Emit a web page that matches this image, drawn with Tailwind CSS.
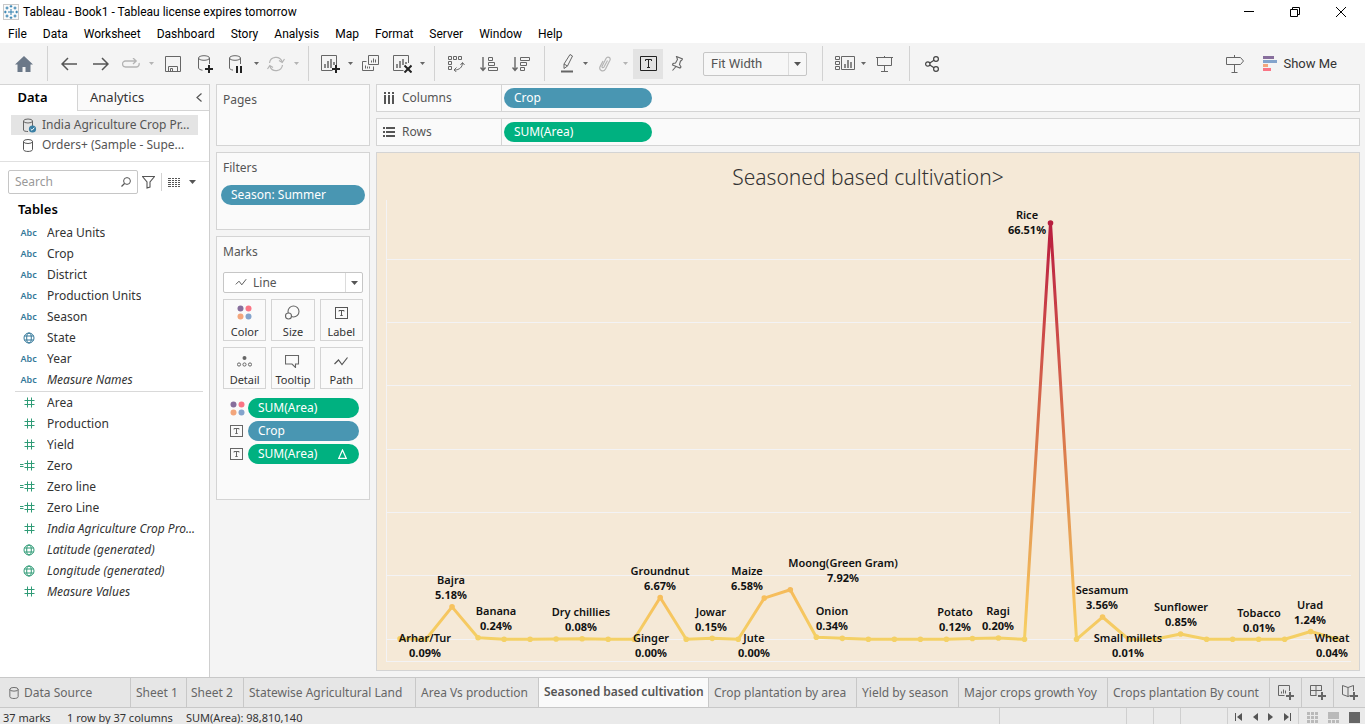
<!DOCTYPE html>
<html lang="en">
<head>
<meta charset="utf-8">
<title>Tableau - Book1</title>
<script src="https://cdn.jsdelivr.net/npm/@tailwindcss/browser@4"></script>
</head>
<body class="flex h-screen flex-col overflow-hidden bg-[#f4f4f4] font-['Noto_Sans',sans-serif] text-xs text-[#333]">

<!-- Icon library -->
<svg class="hidden" aria-hidden="true">
  <symbol id="caret" viewBox="0 0 5 3"><path d="M0 0h5L2.5 3z" fill="currentColor"/></symbol>
  <symbol id="db" viewBox="0 0 10 13"><path d="M.5 2.500v8c0 2.600 9 2.600 9 0v-8" fill="none" stroke="currentColor"/><ellipse cx="5" cy="2.500" rx="4.500" ry="2" fill="none" stroke="currentColor"/></symbol>
  <symbol id="tbox" viewBox="0 0 13 12"><rect x=".5" y=".5" width="12" height="11" fill="none" stroke="currentColor"/><path d="M4 4.500V3.500h5v1M6.500 3.500v5M5.300 8.500h2.400" fill="none" stroke="currentColor"/></symbol>
  <symbol id="dots" viewBox="0 0 15 15"><circle cx="3.500" cy="3.500" r="3" fill="#876e9c"/><circle cx="11.500" cy="3.500" r="3" fill="#fa7585"/><circle cx="3.500" cy="11.500" r="3" fill="#f3a67c"/><circle cx="11.500" cy="11.500" r="3" fill="#84a4cc"/></symbol>
  <symbol id="hash" viewBox="0 0 11 11"><path d="M3.500.5v10M7.500.5v10M.5 3.500h10M.5 7.500h10" stroke="currentColor" fill="none"/></symbol>
  <symbol id="calc" viewBox="0 0 15 11"><path d="M7.500.5v10M11.500.5v10M4.500 3.500h10M4.500 7.500h10M0 4.500h3.500M0 6.500h3.500" stroke="currentColor" fill="none"/></symbol>
  <symbol id="globe" viewBox="0 0 12 12"><circle cx="6" cy="6" r="5" fill="none" stroke="currentColor"/><ellipse cx="6" cy="6" rx="2.300" ry="5" fill="none" stroke="currentColor"/><path d="M1.500 4h9M1.500 8h9" stroke="currentColor"/></symbol>
  <symbol id="zig" viewBox="0 0 14 10"><path d="M.5 8 4.500 4l3.500 4.500 5.500-7" fill="none" stroke="currentColor" stroke-width="1.200"/></symbol>
</svg>

<header class="flex-none bg-white font-['Roboto','Noto_Sans',sans-serif] text-black">
  <div class="flex h-6 items-center">
    <svg class="ml-[3px] size-4" viewBox="0 0 16 16"><rect x=".5" y=".5" width="15" height="15" fill="#fafafa" stroke="#c9c9c9"/><path d="M8 5v6M5 8h6M4 2.500v3M2.500 4h3M12 2.500v3M10.500 4h3M4 10.500v3M2.500 12h3M12 10.500v3M10.500 12h3M8 1v2.600M6.700 2.300h2.600M8 12.400V15M6.700 13.700h2.600M1 8h2.600M2.300 6.700v2.600M12.400 8H15M13.700 6.700v2.600" stroke="#2f7fae" stroke-width="1"/></svg>
    <h1 class="ml-1">Tableau - Book1 - Tableau license expires tomorrow</h1>
    <div class="mr-px ml-auto flex">
      <button class="flex h-5 w-[46px] items-center justify-center" aria-label="Minimize"><svg class="size-[10px]" viewBox="0 0 10 10"><path d="M0 4.500h10" stroke="#000"/></svg></button>
      <button class="flex h-5 w-[46px] items-center justify-center" aria-label="Restore"><svg class="size-[10px]" viewBox="0 0 10 10"><path d="M.5 2.500h7v7h-7zM2.500 2.500v-2h7v7h-2" fill="none" stroke="#000"/></svg></button>
      <button class="flex h-5 w-[46px] items-center justify-center" aria-label="Close"><svg class="size-[10px]" viewBox="0 0 10 10"><path d="M0 0l10 10M10 0 0 10" stroke="#000"/></svg></button>
    </div>
  </div>
  <nav class="flex h-[19px] items-center gap-4 pl-2">
    <button>File</button><button>Data</button><button>Worksheet</button><button>Dashboard</button><button>Story</button><button>Analysis</button><button>Map</button><button>Format</button><button>Server</button><button>Window</button><button>Help</button>
  </nav>
</header>

<div class="flex h-[41px] flex-none items-center text-[#666]" role="toolbar">
  <button class="flex h-8 w-[47px] items-center justify-center" aria-label="Home"><svg class="h-4 w-[18px]" viewBox="0 0 18 16"><path d="M9 0 0 8.500h2.500V16h5v-5h3v5h5V8.500H18z" fill="#6b7888"/></svg></button>
  <span class="h-[35px] w-px bg-[#d2d2d2]"></span>
  <button class="ml-[5px] flex h-8 w-8 items-center justify-center" aria-label="Undo"><svg class="h-3.5 w-4" viewBox="0 0 16 14"><path d="M16 7H1M7 1 1 7l6 6" fill="none" stroke="#555" stroke-width="1.500"/></svg></button>
  <button class="flex h-8 w-8 items-center justify-center" aria-label="Redo"><svg class="h-3.5 w-4" viewBox="0 0 16 14"><path d="M0 7h15M9 1l6 6-6 6" fill="none" stroke="#555" stroke-width="1.500"/></svg></button>
  <button class="flex h-8 w-7 items-center justify-center text-[#b4b4b4]" aria-label="Replay"><svg class="h-3 w-[18px]" viewBox="0 0 18 12"><path d="M6 3H3.500a3 3 0 0 0 0 6h11a3 3 0 0 0 2.500-4M6 3h8M11 0l3.200 3L11 6" fill="none" stroke="currentColor" stroke-width="1.300"/></svg></button>
  <button class="flex h-8 w-3 items-center justify-center text-[#b4b4b4]" aria-label="Replay options"><svg class="h-[3px] w-[5px]"><use href="#caret"/></svg></button>
  <button class="flex h-8 w-8 items-center justify-center" aria-label="Save"><svg class="size-4" viewBox="0 0 16 16"><path d="M.5.5h15v15H.5zM3.500 15.500v-5h9v5M5.500 15.500v-3h2v3" fill="none" stroke="currentColor"/></svg></button>
  <button class="flex h-8 w-8 items-center justify-center" aria-label="New data source"><svg class="h-[18px] w-4" viewBox="0 0 16 18"><path d="M1.500 3v10c0 1 2 2 4 2.200M12.500 3v6" fill="none" stroke="currentColor"/><ellipse cx="7" cy="3" rx="5.500" ry="2.300" fill="none" stroke="currentColor"/><path d="M12 10v8M8 14h8" stroke="#222" stroke-width="2"/></svg></button>
  <button class="flex h-8 w-7 items-center justify-center" aria-label="Pause updates"><svg class="h-[18px] w-4" viewBox="0 0 16 18"><path d="M2.500 3v10c0 1 1.500 1.800 3.500 2.100M13.500 3v6" fill="none" stroke="currentColor"/><ellipse cx="8" cy="3" rx="5.500" ry="2.300" fill="none" stroke="currentColor"/><path d="M10 11v7M14 11v7" stroke="#222" stroke-width="2"/></svg></button>
  <button class="flex h-8 w-3.5 items-center justify-center" aria-label="Pause options"><svg class="h-[3px] w-[5px]"><use href="#caret"/></svg></button>
  <button class="flex h-8 w-[26px] items-center justify-center text-[#b4b4b4]" aria-label="Refresh"><svg class="h-4 w-[18px]" viewBox="0 0 18 16"><path d="M2.500 7A6.500 6.500 0 0 1 15 5.500M15.500 9A6.500 6.500 0 0 1 3 10.500M17.500 3 15.200 6.500 12 4.500M.5 13l2.300-3.500L6 11.500" fill="none" stroke="currentColor" stroke-width="1.200"/></svg></button>
  <button class="flex h-8 w-3.5 items-center justify-center text-[#b4b4b4]" aria-label="Refresh options"><svg class="h-[3px] w-[5px]"><use href="#caret"/></svg></button>
  <span class="ml-[5px] h-[35px] w-px bg-[#d2d2d2]"></span>
  <button class="ml-[5px] flex h-8 w-8 items-center justify-center" aria-label="New worksheet"><svg class="h-[18px] w-[19px]" viewBox="0 0 19 18"><path d="M15.500 10V.5H.5v15h11" fill="none" stroke="currentColor"/><path d="M4 9v4M7 6v7M10 4v9M13 7v3" stroke="currentColor" stroke-width="1.500"/><path d="M15 10v8M11 14h8" stroke="#222" stroke-width="2"/></svg></button>
  <button class="flex h-8 w-2 items-center justify-center" aria-label="New worksheet options"><svg class="h-[3px] w-[5px]"><use href="#caret"/></svg></button>
  <button class="flex h-8 w-8 items-center justify-center" aria-label="Duplicate"><svg class="h-[17px] w-[17px]" viewBox="0 0 17 17"><path d="M6.500.5h10v9h-10zM4.500 6.500h-4v9h11v-4M9.500 7.500v-2M11.500 7.500v-4M13.500 7.500v-3M3.500 13.500v-3M5.500 13.500v-2M7.500 13.500v-2" fill="none" stroke="currentColor"/></svg></button>
  <button class="flex h-8 w-8 items-center justify-center" aria-label="Clear sheet"><svg class="h-[18px] w-[19px]" viewBox="0 0 19 18"><path d="M15.500 8V.5H.5v15h10" fill="none" stroke="currentColor"/><path d="M4 9v4M7 6v7M10 4v6M13 7v2" stroke="currentColor" stroke-width="1.500"/><path d="M11.500 10.500l7 7M18.500 10.500l-7 7" stroke="#222" stroke-width="2"/></svg></button>
  <button class="flex h-8 w-2 items-center justify-center" aria-label="Clear options"><svg class="h-[3px] w-[5px]"><use href="#caret"/></svg></button>
  <span class="ml-2 h-[35px] w-px bg-[#d2d2d2]"></span>
  <button class="ml-[5px] flex h-8 w-8 items-center justify-center" aria-label="Swap rows and columns"><svg class="h-4 w-[17px]" viewBox="0 0 17 16"><path d="M.5.5h3v3h-3zM5.500.5h3v3h-3zM10.500.5h3v3h-3zM.5 5.500h3v3h-3zM.5 10.500h3v3h-3zM6.500 14c5 0 8-3 8-7M12.500 9l2-2.500 2 2.500M8.500 11.500 6 14l2.500 2" fill="none" stroke="currentColor"/></svg></button>
  <button class="flex h-8 w-[34px] items-center justify-center" aria-label="Sort ascending"><svg class="h-4 w-[18px]" viewBox="0 0 18 16"><path d="M3 1v13M.5 11.500 3 14.500l2.500-3" fill="none" stroke="currentColor" stroke-width="1.400"/><path d="M8.500 1.500h4v3h-4zM8.500 6.500h6v3h-6zM8.500 11.500h9v3h-9z" fill="none" stroke="currentColor"/></svg></button>
  <button class="flex h-8 w-[30px] items-center justify-center" aria-label="Sort descending"><svg class="h-4 w-[18px]" viewBox="0 0 18 16"><path d="M3 1v13M.5 11.500 3 14.500l2.500-3" fill="none" stroke="currentColor" stroke-width="1.400"/><path d="M8.500 1.500h9v3h-9zM8.500 6.500h6v3h-6zM8.500 11.500h4v3h-4z" fill="none" stroke="currentColor"/></svg></button>
  <span class="ml-2 h-[35px] w-px bg-[#d2d2d2]"></span>
  <button class="ml-2 flex h-8 w-7 items-center justify-center" aria-label="Highlight"><svg class="h-[19px] w-[13px]" viewBox="0 0 13 19"><path d="M9 .5l2.500 1.500-5 10-3.500 2.500v-4.500zM3 10l3.500 2" fill="none" stroke="currentColor"/><path d="M0 17.500h12" stroke="currentColor" stroke-width="2"/></svg></button>
  <button class="flex h-8 w-2 items-center justify-center" aria-label="Highlight options"><svg class="h-[3px] w-[5px]"><use href="#caret"/></svg></button>
  <button class="flex h-8 w-8 items-center justify-center text-[#b4b4b4]" aria-label="Group members"><svg class="h-4 w-3" viewBox="0 0 12 16"><path d="M8.500 4.500 5 11c-.8 1.400-2.500.5-1.900-.8L7 2.500c1.500-2.700 5.200-1 3.900 1.800L6.500 13c-2 3.700-7 1.500-5.400-2.400L4 5" fill="none" stroke="currentColor" stroke-width="1.200"/></svg></button>
  <button class="flex h-8 w-2 items-center justify-center text-[#b4b4b4]" aria-label="Group options"><svg class="h-[3px] w-[5px]"><use href="#caret"/></svg></button>
  <button class="ml-1 flex h-[30px] w-[30px] items-center justify-center bg-[#e3e3e3] text-[#222]" aria-label="Show mark labels" aria-pressed="true"><svg class="h-[15px] w-[17px]" viewBox="0 0 17 15"><path d="M.5.5h16v14H.5zM5.500 5V3.500h6V5M8.500 3.500v8M7 11.500h3" fill="none" stroke="currentColor"/></svg></button>
  <button class="flex h-8 w-7 items-center justify-center" aria-label="Fix axes"><svg class="h-[15px] w-3" viewBox="0 0 12 15"><path d="M5.500.5l6 2.500-1 1.500-1 .5-1 3.500L10 11l-1 1-7.500-3 .5-1.500 2.500-.5 2-3.500zM5 10.500 1.500 14.500" fill="none" stroke="currentColor" stroke-width="1.100"/></svg></button>
  <div class="relative ml-3 h-6 w-[104px]">
    <select aria-label="Fit" class="h-6 w-full appearance-none rounded-xs border border-[#c6c6c6] bg-[#f7f7f7] pl-[7px] font-['Roboto','Noto_Sans',sans-serif] text-[13px] leading-5 text-[#555]"><option>Fit Width</option><option>Standard</option><option>Entire View</option></select>
    <span class="pointer-events-none absolute inset-y-px right-px flex w-[18px] items-center justify-center border-l border-[#dcdcdc]"><svg class="h-1 w-[7px]" viewBox="0 0 7 4"><path d="M0 0h7L3.500 4z" fill="#555"/></svg></span>
  </div>
  <span class="ml-[15px] h-[35px] w-px bg-[#d2d2d2]"></span>
  <button class="ml-2 flex h-8 w-7 items-center justify-center" aria-label="Show or hide cards"><svg class="h-[15px] w-5" viewBox="0 0 20 15"><path d="M.5.500h4v3h-4zM.5 5.500h4v3h-4zM.5 10.500h4v3h-4zM6.500.500h13v13h-13z" fill="none" stroke="currentColor"/><path d="M10 8v4M13 4v8M16 6v6" stroke="currentColor" stroke-width="1.500"/></svg></button>
  <button class="flex h-8 w-2 items-center justify-center" aria-label="Cards options"><svg class="h-[3px] w-[5px]"><use href="#caret"/></svg></button>
  <button class="flex h-8 w-[34px] items-center justify-center" aria-label="Presentation mode"><svg class="h-4 w-[17px]" viewBox="0 0 17 16"><path d="M0 1.500h17M1.500 1.500v8h14v-8M8.500 0v1M8.500 9.500v6M5 15.500h7" fill="none" stroke="currentColor"/></svg></button>
  <span class="ml-2 h-[35px] w-px bg-[#d2d2d2]"></span>
  <button class="ml-1.5 flex h-8 w-8 items-center justify-center text-[#444]" aria-label="Share"><svg class="h-4 w-3.5" viewBox="0 0 14 16"><g fill="none" stroke="currentColor" stroke-width="1.200"><circle cx="2.800" cy="8" r="2.200"/><circle cx="11" cy="3" r="2.400"/><circle cx="11" cy="13" r="2.400"/><path d="M4.800 7 9 4.200M4.800 9 9 11.800"/></g></svg></button>
  <button class="ml-auto flex h-8 w-8 items-center justify-center" aria-label="Guide"><svg class="h-[18px] w-[18px]" viewBox="0 0 18 18"><path d="M.5 2.500h14l3 3.500-3 3.500H.5zM8.500 0v2.500M8.500 9.500v8M5.500 17.500h6" fill="none" stroke="currentColor"/></svg></button>
  <button class="mr-7 ml-3 flex items-center gap-1.5 font-['Roboto','Noto_Sans',sans-serif] text-[13px] text-[#333]"><svg class="h-[15px] w-3.5" viewBox="0 0 14 15"><path d="M0 0h11v3H0z" fill="#876e9c"/><path d="M0 4h14v3H0z" fill="#84a4cc"/><path d="M0 8h5v3H0z" fill="#f3a67c"/><path d="M0 12h8v3H0z" fill="#fa7585"/></svg>Show Me</button>
</div>

<main class="flex min-h-0 flex-1">
  <!-- Data pane -->
  <aside class="flex w-[210px] flex-none flex-col border-r border-[#cfcfcf] bg-white">
    <div class="flex h-[27px] flex-none text-[13px]" role="tablist">
      <button role="tab" aria-selected="true" class="w-[77px] border-t border-[#d4d4d4] pr-3 font-semibold text-black">Data</button>
      <button role="tab" aria-selected="false" class="flex flex-1 items-center justify-between border-t border-b border-l border-[#d4d4d4] bg-[#fafafa] pr-[7px] pl-3">Analytics<svg class="h-[9px] w-1.5" viewBox="0 0 6 9"><path d="M5.500.5l-4.500 4 4.500 4" fill="none" stroke="#555" stroke-width="1.200"/></svg></button>
    </div>
    <div class="flex-none border-b border-[#e0e0e0] px-[11px] pt-1 pb-1.5 text-[#555]">
      <button class="flex h-5 w-full items-center gap-1.5 bg-[#e4e4e4] pl-3"><svg class="h-[15px] w-[14px] flex-none" viewBox="0 0 14 15"><path d="M.5 3v9c0 1 2 1.500 4.500 1.500M9.500 3v5" fill="none" stroke="#666"/><ellipse cx="5" cy="3" rx="4.500" ry="2" fill="none" stroke="#666"/><circle cx="9.500" cy="11" r="3.600" fill="#3a7fa4"/><path d="M7.700 11l1.300 1.300 2.300-2.600" fill="none" stroke="#fff"/></svg><span class="-ml-px truncate">India Agriculture Crop Pr...</span></button>
      <button class="flex h-5 w-full items-center gap-[9px] pl-3"><svg class="h-[13px] w-2.5 flex-none"><use href="#db"/></svg><span class="truncate">Orders+ (Sample - Supe...</span></button>
    </div>
    <div class="mt-2 flex h-6 flex-none items-center pl-2 text-[#555]">
      <label class="flex h-6 w-[130px] items-center rounded-xs border border-[#c6c6c6] px-1.5"><input type="search" aria-label="Search" placeholder="Search" class="w-full min-w-0 outline-none placeholder:text-[#999]"><svg class="h-2.5 w-2.5 flex-none" viewBox="0 0 10 10"><circle cx="6" cy="4" r="3.400" fill="none" stroke="#555"/><path d="M3.500 6.500.5 9.500" stroke="#555" stroke-width="1.200"/></svg></label>
      <button class="ml-1 flex w-[13px] justify-center" aria-label="Filter"><svg class="h-3.5 w-[13px]" viewBox="0 0 13 14"><path d="M.5 1.500h12L8 7v5L5 13V7z" fill="none" stroke="#555" stroke-width="1.100"/></svg></button>
      <span class="ml-1.5 h-[18px] w-px bg-[#d2d2d2]"></span>
      <button class="ml-1.5 flex items-center gap-[9px]" aria-label="View"><svg class="h-[9px] w-3" viewBox="0 0 12 9"><path d="M0 .5h3m1 0h2m1 0h2m1 0h2M0 2.500h3m1 0h2m1 0h2m1 0h2M0 4.500h3m1 0h2m1 0h2m1 0h2M0 6.500h3m1 0h2m1 0h2m1 0h2M0 8.500h3m1 0h2m1 0h2m1 0h2" stroke="#555"/></svg><svg class="h-1 w-[7px]" viewBox="0 0 7 4"><path d="M0 0h7L3.500 4z" fill="#555"/></svg></button>
    </div>
    <h2 class="mt-[5px] flex-none pl-[18px] text-[13px] leading-5 font-semibold text-black">Tables</h2>
    <ul id="dimensions" class="mt-[3px] mr-1.5 ml-[15px] border-b border-[#d9d9d9] pb-px"></ul>
    <ul id="measures" class="mr-1.5 ml-[15px]"></ul>
  </aside>

  <!-- Shelves -->
  <section class="ml-1.5 flex w-[154px] flex-none flex-col gap-1.5 text-[#555]">
    <div class="h-[62px] border border-[#d4d4d4] bg-[#fafafa] px-1.5 pt-1.5"><h3 class="leading-[18px]">Pages</h3></div>
    <div class="h-[78px] border border-[#d4d4d4] bg-[#fafafa] px-1 pt-1.5"><h3 class="pl-0.5 leading-[18px]">Filters</h3><button class="mt-2 flex h-5 w-full items-center rounded-full bg-[#4996b2] pl-2.5 text-white">Season: Summer</button></div>
    <div class="h-[264px] border border-[#d4d4d4] bg-[#fafafa] px-1.5 pt-1.5">
      <h3 class="leading-[18px]">Marks</h3>
      <div class="relative mt-[11px] h-[21px] w-[140px]">
        <select aria-label="Mark type" class="h-[21px] w-full appearance-none rounded-xs border border-[#c6c6c6] bg-white pl-[29px] leading-[18px]"><option>Line</option><option>Bar</option><option>Area</option></select>
        <svg class="pointer-events-none absolute top-[6px] left-3 h-2 w-3"><use href="#zig"/></svg>
        <span class="pointer-events-none absolute inset-y-px right-px flex w-[17px] items-center justify-center border-l border-[#dcdcdc]"><svg class="h-1 w-[7px]" viewBox="0 0 7 4"><path d="M0 0h7L3.500 4z" fill="#555"/></svg></span>
      </div>
      <div class="mt-1.5 grid w-[140px] grid-cols-3 gap-x-[5px] gap-y-1.5 text-[11px] leading-4 text-[#333]">
        <button class="flex h-[42px] flex-col items-center justify-between border border-[#d4d4d4] pt-[5px]"><svg class="size-[15px]"><use href="#dots"/></svg>Color</button>
        <button class="flex h-[42px] flex-col items-center justify-between border border-[#d4d4d4] pt-[5px]"><svg class="size-[15px]" viewBox="0 0 15 15"><circle cx="8.500" cy="6.500" r="5.500" fill="none" stroke="#666" stroke-width="1.100"/><circle cx="3.500" cy="11" r="3" fill="#fafafa" stroke="#666" stroke-width="1.100"/></svg>Size</button>
        <button class="flex h-[42px] flex-col items-center justify-between border border-[#d4d4d4] pt-[7px]"><svg class="h-3 w-[13px] text-[#555]"><use href="#tbox"/></svg>Label</button>
        <button class="flex h-[42px] flex-col items-center justify-between border border-[#d4d4d4] pt-2"><svg class="h-[11px] w-[15px]" viewBox="0 0 15 11"><circle cx="7.500" cy="2" r="2" fill="#666"/><g fill="none" stroke="#666"><circle cx="2" cy="8.500" r="1.600"/><circle cx="7.500" cy="8.500" r="1.600"/><circle cx="13" cy="8.500" r="1.600"/></g></svg>Detail</button>
        <button class="flex h-[42px] flex-col items-center justify-between border border-[#d4d4d4] pt-[7px]"><svg class="h-[13px] w-[15px]" viewBox="0 0 15 13"><path d="M.5.5h13v8.500h-3V12.500L7 9H.5z" fill="none" stroke="#666" stroke-width="1.100"/></svg>Tooltip</button>
        <button class="flex h-[42px] flex-col items-center justify-between border border-[#d4d4d4] pt-2"><svg class="h-2.5 w-3.5 text-[#555]"><use href="#zig"/></svg>Path</button>
      </div>
      <div class="mt-[9px] flex flex-col gap-[3px] pr-1 pl-[7px] text-white">
        <div class="flex items-center gap-[3px]"><svg class="size-[15px] flex-none"><use href="#dots"/></svg><button class="flex h-5 flex-1 items-center rounded-full bg-[#00b180] pl-2.5">SUM(Area)</button></div>
        <div class="flex items-center gap-[3px]"><span class="flex w-[15px] flex-none text-[#666]"><svg class="h-3 w-[13px]"><use href="#tbox"/></svg></span><button class="flex h-5 flex-1 items-center rounded-full bg-[#4996b2] pl-2.5">Crop</button></div>
        <div class="flex items-center gap-[3px]"><span class="flex w-[15px] flex-none text-[#666]"><svg class="h-3 w-[13px]"><use href="#tbox"/></svg></span><button class="flex h-5 flex-1 items-center justify-between rounded-full bg-[#00b180] pr-3 pl-2.5">SUM(Area)<svg class="h-2.5 w-[9px]" viewBox="0 0 9 10"><path d="M4.500 1 8.300 9.400H.7z" fill="none" stroke="#fff" stroke-width="1.200"/></svg></button></div>
      </div>
    </div>
  </section>

  <!-- Worksheet -->
  <section class="mr-[5px] mb-1.5 ml-1.5 flex min-w-0 flex-1 flex-col gap-1.5">
    <div class="flex h-7 flex-none border border-[#d4d4d4] bg-[#fafafa]">
      <div class="flex w-[125px] items-center gap-[7px] border-r border-[#d4d4d4] pl-[7px] text-[#555]"><svg class="h-3 w-[11px]" viewBox="0 0 11 12"><path d="M1 0v2M1 3v9M5 0v2M5 3v9M9 0v2M9 3v9" stroke="#555" stroke-width="2"/></svg>Columns</div>
      <button class="m-[3px] ml-0.5 flex h-5 w-[148px] items-center rounded-full bg-[#4996b2] pl-2.5 text-white">Crop</button>
    </div>
    <div class="flex h-7 flex-none border border-[#d4d4d4] bg-[#fafafa]">
      <div class="flex w-[125px] items-center gap-[7px] border-r border-[#d4d4d4] pl-1.5 text-[#555]"><svg class="h-[10px] w-3" viewBox="0 0 12 10"><path d="M0 1h2M3 1h9M0 5h2M3 5h9M0 9h2M3 9h9" stroke="#555" stroke-width="2"/></svg>Rows</div>
      <button class="m-[3px] ml-0.5 flex h-5 w-[148px] items-center rounded-full bg-[#00b180] pl-2.5 text-white">SUM(Area)</button>
    </div>
    <div class="flex min-h-0 flex-1 border border-[#d4d4d4] bg-[#f5e9d7]">
      <svg id="chart" class="h-full w-full" viewBox="377 153 982 517" role="img" aria-label="Seasoned based cultivation by crop">
        <defs><linearGradient id="heat" gradientUnits="userSpaceOnUse" x1="0" y1="223" x2="0" y2="640"><stop offset="0" stop-color="#b71d3e"/><stop offset=".1" stop-color="#c02c43"/><stop offset=".3" stop-color="#cf5049"/><stop offset=".6" stop-color="#de864e"/><stop offset=".8" stop-color="#ebab58"/><stop offset=".9" stop-color="#f7bf5c"/><stop offset="1" stop-color="#f4d166"/></linearGradient></defs>
        <text x="868" y="185" text-anchor="middle" class="fill-[#333] text-[21px] font-light">Seasoned based cultivation&gt;</text>
        <path d="M386 259.500h965M386 322.500h965M386 385.500h965M386 449.500h965M386 512.500h965M386 575.500h965M386 639.500h965M386 661.500h965M386.500 200v462" stroke="#f3f3f5" shape-rendering="crispEdges" fill="none"/>
      </svg>
    </div>
  </section>
</main>

<!-- Sheet tabs -->
<nav class="flex h-[31px] flex-none border-t border-b border-[#c8c8c8] bg-[#e6e6e6] text-[#666]">
  <button class="flex w-[131px] items-center gap-[5px] border-r border-[#c8c8c8] pl-[9px]"><svg class="h-3 w-[10px]"><use href="#db"/></svg>Data Source</button>
  <button class="w-14 border-r border-[#c8c8c8] pl-[5px] text-left">Sheet 1</button>
  <button class="w-[57px] border-r border-[#c8c8c8] pl-1 text-left">Sheet 2</button>
  <button class="w-[172px] border-r border-[#c8c8c8] pl-[5px] text-left">Statewise Agricultural Land</button>
  <button class="w-[123px] border-r border-[#c8c8c8] pl-[5px] text-left">Area Vs production</button>
  <button class="w-[170px] border-r border-[#c8c8c8] bg-[#fafafa] pb-0.5 pl-[5px] text-left font-semibold text-[#555]">Seasoned based cultivation</button>
  <button class="w-[148px] border-r border-[#c8c8c8] pl-[5px] text-left">Crop plantation by area</button>
  <button class="w-[102px] border-r border-[#c8c8c8] pl-[5px] text-left">Yield by season</button>
  <button class="w-[149px] border-r border-[#c8c8c8] pl-[5px] text-left">Major crops growth Yoy</button>
  <button class="flex-1 border-r border-[#c8c8c8] pl-[5px] text-left">Crops plantation By count</button>
  <button class="flex w-8 items-center justify-center border-r border-[#c8c8c8]" aria-label="New worksheet tab"><svg class="h-[15px] w-4" viewBox="0 0 16 15"><path d="M11.500 6V.5H.5v10h6M3.500 8.500v-2M5.500 8.500v-4M7.500 8.500v-3" fill="none" stroke="#666"/><path d="M12 7v8M8 11h8" stroke="#666" stroke-width="2"/></svg></button>
  <button class="flex w-8 items-center justify-center border-r border-[#c8c8c8]" aria-label="New dashboard"><svg class="h-[15px] w-4" viewBox="0 0 16 15"><path d="M11.500 6V.5H.5v10h6M6 .5v10M.5 5.500h11" fill="none" stroke="#666"/><path d="M12 7v8M8 11h8" stroke="#666" stroke-width="2"/></svg></button>
  <button class="flex w-[31px] items-center justify-center" aria-label="New story"><svg class="h-[15px] w-4" viewBox="0 0 16 15"><path d="M11.500 6V.5L6 2.500.5.5v9L6 11.500V2.500M6 11.500l2-.8" fill="none" stroke="#666"/><path d="M12 7v8M8 11h8" stroke="#666" stroke-width="2"/></svg></button>
</nav>

<footer class="flex h-4 flex-none items-center bg-[#eaeaea] pl-[3px] text-[11px] leading-4 text-[#333]">
  <div class="flex pt-1"><span class="w-16">37 marks</span><span class="w-[119px]">1 row by 37 columns</span><span>SUM(Area): 98,810,140</span></div>
  <div class="ml-auto flex h-full items-center text-[#555]">
    <span class="h-full w-[127px] border-l border-[#cfcfcf]"></span>
    <span class="h-full w-[27px] border-l border-[#cfcfcf]"></span>
    <span class="h-full w-[27px] border-l border-[#cfcfcf]"></span>
    <span class="h-full w-[47px] border-l border-[#cfcfcf]"></span>
    <div class="flex h-full w-[71px] items-center justify-between border-l border-[#cfcfcf] pt-0.5 pr-[7px] pl-[7px]">
      <button aria-label="First sheet"><svg class="h-2 w-[7px]" viewBox="0 0 7 8"><path d="M.5 0v8" stroke="#555"/><path d="M7 0v8L2 4z" fill="#555"/></svg></button>
      <button aria-label="Previous sheet"><svg class="h-2 w-[5px]" viewBox="0 0 5 8"><path d="M5 0v8L0 4z" fill="#555"/></svg></button>
      <button aria-label="Next sheet"><svg class="h-2 w-[5px]" viewBox="0 0 5 8"><path d="M0 0v8L5 4z" fill="#555"/></svg></button>
      <button aria-label="Last sheet"><svg class="h-2 w-[7px]" viewBox="0 0 7 8"><path d="M6.500 0v8" stroke="#555"/><path d="M0 0v8L5 4z" fill="#555"/></svg></button>
    </div>
    <div class="flex h-full items-center gap-2.5 border-l border-[#cfcfcf] pt-[3px] pr-[5px] pl-2">
      <button aria-label="Show sheet sorter"><svg class="h-[11px] w-[11px]" viewBox="0 0 11 11"><path d="M0 1.500h3m1 0h3m1 0h3M0 5.500h3m1 0h3m1 0h3M0 9.500h3m1 0h3m1 0h3" stroke="#b9b9b9" stroke-width="3"/></svg></button>
      <button aria-label="Show filmstrip"><svg class="h-[11px] w-[11px]" viewBox="0 0 11 11"><path d="M0 0h11v7H0zM0 8h3v3H0zM4 8h3v3H4zM8 8h3v3H8z" fill="#b9b9b9"/></svg></button>
      <button aria-label="Show tabs"><svg class="h-[11px] w-[11px]" viewBox="0 0 11 11"><path d="M0 0h11v11H0z" fill="#666"/></svg></button>
    </div>
  </div>
</footer>

<script>
  // Field lists of the data pane: [icon, name, generated field]
  const icons = {
    abc: '<span class="w-[17px] flex-none text-[9px] font-semibold text-[#35799a]">Abc</span>',
    geo: '<svg class="h-3 w-3 text-[#35799a]"><use href="#globe"/></svg>',
    num: '<svg class="h-[11px] w-[11px]"><use href="#hash"/></svg>',
    calc: '<svg class="mr-[3px] h-[11px] w-[15px]"><use href="#calc"/></svg>',
    gen: '<svg class="h-3 w-3"><use href="#globe"/></svg>',
  };
  const row = ([icon, name, generated]) =>
    `<li class="flex h-[21px] items-center text-[#2f9b76]"><span class="flex w-7 flex-none justify-center">${icons[icon]}</span><a href="#" class="ml-1 truncate text-[#333]${generated ? ' italic' : ''}">${name}</a></li>`;
  document.getElementById('dimensions').innerHTML = [
    ['abc', 'Area Units'], ['abc', 'Crop'], ['abc', 'District'], ['abc', 'Production Units'],
    ['abc', 'Season'], ['geo', 'State'], ['abc', 'Year'], ['abc', 'Measure Names', true],
  ].map(row).join('');
  document.getElementById('measures').innerHTML = [
    ['num', 'Area'], ['num', 'Production'], ['num', 'Yield'], ['calc', 'Zero'], ['calc', 'Zero line'],
    ['calc', 'Zero Line'], ['num', 'India Agriculture Crop Pro...', true], ['gen', 'Latitude (generated)', true],
    ['gen', 'Longitude (generated)', true], ['num', 'Measure Values', true],
  ].map(row).join('');

  // Share of area per crop, in percent
  const share = [.09, 0, 5.18, .24, 0, 0, .04, .08, 0, 0, 6.67, 0, .15, 0, 6.58, 7.92, .34, .15, 0, 0, 0, 0,
    .12, .2, 0, 66.51, 0, 3.56, .01, .02, .85, 0, 0, .01, 0, 1.24, .04];
  const points = share.map((v, i) => [400 + i * 26.02, 639.3 - v * 6.26]);
  // Label: [name, value, centre x, baseline y of name]
  const labels = [
    ['Arhar/Tur', '0.09%', 425, 642], ['Bajra', '5.18%', 451, 584], ['Banana', '0.24%', 496, 615],
    ['Dry chillies', '0.08%', 581, 616], ['Ginger', '0.00%', 651, 642], ['Groundnut', '6.67%', 660, 575],
    ['Jowar', '0.15%', 711, 616], ['Jute', '0.00%', 754, 642], ['Maize', '6.58%', 747, 575],
    ['Moong(Green Gram)', '7.92%', 843, 567], ['Onion', '0.34%', 832, 615], ['Potato', '0.12%', 955, 616],
    ['Ragi', '0.20%', 998, 615], ['Rice', '66.51%', 1027, 219], ['Sesamum', '3.56%', 1102, 594],
    ['Small millets', '0.01%', 1128, 642], ['Sunflower', '0.85%', 1181, 611], ['Tobacco', '0.01%', 1259, 617],
    ['Urad', '1.24%', 1310, 609], ['Wheat', '0.04%', 1332, 642],
  ];
  const chart = document.getElementById('chart');
  chart.innerHTML += `<polyline points="${points.join(' ')}" fill="none" stroke="url(#heat)" stroke-width="3" stroke-linejoin="bevel"/>` +
    points.map(([x, y]) => `<circle cx="${x}" cy="${y}" r="2.800" fill="url(#heat)"/>`).join('') +
    labels.map(([n, v, x, y]) => `<g text-anchor="middle" class="fill-[#111] text-[11px]"><text x="${x}" y="${y}" class="font-semibold">${n}</text><text x="${x}" y="${y + 15}" class="font-bold">${v}</text></g>`).join('');
</script>
</body>
</html>
